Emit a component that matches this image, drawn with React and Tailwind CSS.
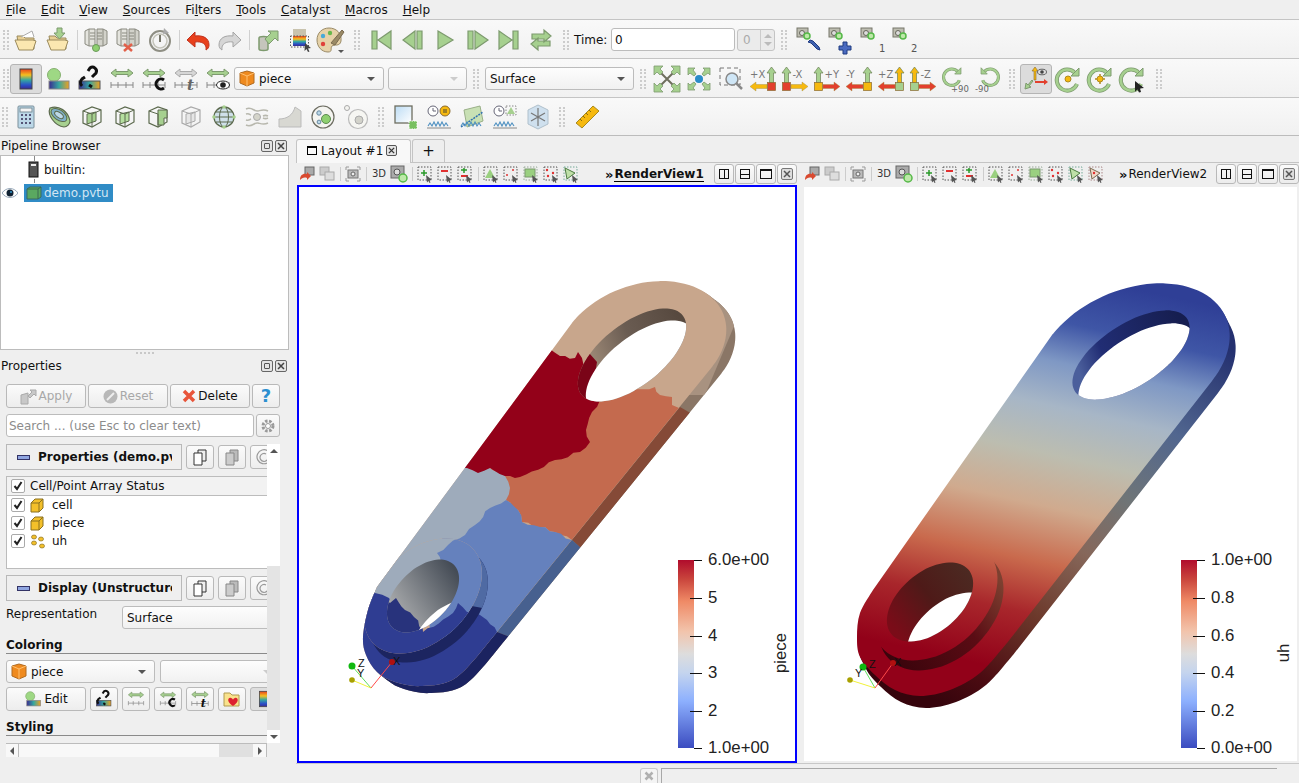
import React from "react";

const G = "#a6d08f";
const GS = "#7d9a6e";
const Y = "#f6b90f";
const R = "#e2402d";

// smooth curve through points, straight lines between the arcs
const arc = (pts) => {
  let d = `L${pts[0][0]} ${pts[0][1]}`;
  for (let i = 0; i < pts.length - 1; i++) {
    const p0 = pts[i - 1] || pts[i];
    const p1 = pts[i];
    const p2 = pts[i + 1];
    const p3 = pts[i + 2] || p2;
    d += `C${p1[0] + (p2[0] - p0[0]) / 6} ${p1[1] + (p2[1] - p0[1]) / 6} ${p2[0] - (p3[0] - p1[0]) / 6} ${p2[1] - (p3[1] - p1[1]) / 6} ${p2[0]} ${p2[1]}`;
  }
  return d;
};
const shape = (...arcs) => `M${arcs[0][0][0]} ${arcs[0][0][1]}` + arcs.map(arc).join("") + "Z";
const poly = (pts) => pts.map((p) => p.join(",")).join(" ");

// points on a tilted ellipse, given its centre and two conjugate half axes
const ell = (c, a, b, from = 360, to = 0, n = 40) =>
  Array.from({ length: n + 1 }, (_, i) => {
    const t = ((from + ((to - from) * i) / n) * Math.PI) / 180;
    return [c[0] + a[0] * Math.cos(t) + b[0] * Math.sin(t), c[1] + a[1] * Math.cos(t) + b[1] * Math.sin(t)];
  });
const ellipse = (c, a, b) => shape(ell(c, a, b));

// rough edge between the partition pieces
const jag = (pts) => {
  const out = [];
  pts.forEach((p, i) => {
    const q = pts[(i + 1) % pts.length];
    const dx = q[0] - p[0];
    const dy = q[1] - p[1];
    const len = Math.hypot(dx, dy) || 1;
    const n = Math.max(1, Math.round(len / 6));
    for (let k = 0; k < n; k++) {
      const off = k === 0 ? 0 : 1.400 * Math.sin((p[0] + k) * 7.3 + p[1] * 3.1 + k * k);
      out.push([p[0] + (dx * k) / n - (dy / len) * off, p[1] + (dy * k) / n + (dx / len) * off]);
    }
  });
  return poly(out);
};

const Svg = ({ children, w = 24, h = 24 }) => (
  <svg width={w} height={h} viewBox="0 0 24 24" className="overflow-visible">
    {children}
  </svg>
);

const Rainbow = ({ id }) => (
  <linearGradient id={id} x1="0" y1="0" x2="0" y2="1">
    <stop offset="0" stopColor="#e8401c" />
    <stop offset="0.3" stopColor="#f5c020" />
    <stop offset="0.55" stopColor="#35a8a0" />
    <stop offset="0.8" stopColor="#2a50c8" />
    <stop offset="1" stopColor="#3a2a90" />
  </linearGradient>
);

const Folder = ({ arrow }) => (
  <Svg>
    <path d="M3 8h6l2 2h9v11H5z" fill="#e8cf94" stroke="#9a8a5c" />
    <path d="M1 12h18l3 1-3 9H5z" fill="#fbe7b0" stroke="#9a8a5c" />
    {arrow ? (
      <path d="M11 0h5v5h3l-5.500 6L8 5h3z" fill={G} stroke={GS} />
    ) : (
      <path d="M7 9l11-6 2 6" fill="#fff" stroke="#aaa" />
    )}
  </Svg>
);

const Server = ({ bad }) => (
  <Svg>
    <path d="M1 3l4-2h6v17H5l-4-2z" fill="#e4e4de" stroke="#8a8a80" />
    <path d="M5 1v17" stroke="#8a8a80" />
    <path d="M13 1h6l4 2v13l-4 2h-6z" fill="#d2d2ca" stroke="#8a8a80" />
    <path d="M19 1v17M6 5h5M6 8h5M6 11h5M13 5h5M13 8h5M13 11h5" stroke="#8a8a80" />
    {bad ? (
      <path d="M8 16l8 7M16 16l-8 7" stroke="#e2604a" strokeWidth="2.500" />
    ) : (
      <circle cx="12" cy="20" r="3.500" fill="#8fd070" stroke="#6a9a5a" />
    )}
  </Svg>
);

const Arrow = ({ flip, color = "#e8401c", stroke = "#c0301c" }) => (
  <Svg>
    <g transform={flip ? "matrix(-1 0 0 1 24 0)" : ""}>
      <path d="M1 12l8-8v4c8-1 14 2 14 9 0 2-1 4-3 5 1-6-4-9-11-8v5z" fill={color} stroke={stroke} />
    </g>
  </Svg>
);

const Vcr = ({ d }) => (
  <Svg>
    <path d={d} fill={G} stroke={GS} strokeWidth="1.200" />
  </Svg>
);

const Cam = ({ children }) => (
  <svg width="26" height="26" viewBox="0 0 26 26" className="overflow-visible">
    <rect x="1" y="1" width="11" height="9" fill="#bdbdb0" stroke="#77776a" />
    <circle cx="6" cy="6" r="2.500" fill="#ddd" stroke="#66665a" />
    <circle cx="11" cy="9" r="3" fill="#bde8a8" stroke="#55b848" strokeWidth="1.500" />
    {children}
  </svg>
);

const Scale = ({ children, tone = G, edge = GS }) => (
  <Svg>
    <path d="M1 6l5-4v2.500h12V2l5 4-5 4V7.500H6V10z" fill={tone} stroke={edge} />
    <path d="M1 18h22M1 15v6M8 15v6M16 15v6M23 15v6" stroke="#888" fill="none" />
    {children}
  </Svg>
);

const AxisIcon = ({ label, side, up, across, box }) => {
  const left = side === "L";
  return (
    <svg width="26" height="24" viewBox="0 0 26 24" className="overflow-visible">
      <g transform={left ? "" : "matrix(-1 0 0 1 26 0)"}>
        <path d="M4.500 0L9 6H6.500v10h-4V6H0z" fill={up} stroke="#6b7f55" strokeWidth=".7" />
        <path d="M9 17.500h11V15l6 4.500-6 4.500v-2.500H9z" fill={across} stroke="#a08a40" strokeWidth=".4" />
        <rect x=".5" y="15.500" width="8" height="8" fill={box} stroke="#8a6a30" strokeWidth=".7" />
      </g>
      <text x={left ? 10.500 : 0} y="11" fontSize="10" fill="#777" fontFamily="DejaVu Sans">
        {label}
      </text>
    </svg>
  );
};

const SpinPath = () => (
  <>
    <path d="M19 6a10.500 10.500 0 1 0 2 11" fill="none" stroke={GS} strokeWidth="4" />
    <path d="M19 6a10.500 10.500 0 1 0 2 11" fill="none" stroke={G} strokeWidth="2.500" />
    <path d="M23 1v8h-8z" fill={G} stroke={GS} />
  </>
);

const Spin = ({ children }) => (
  <Svg>
    <SpinPath />
    {children}
  </Svg>
);

const Box3 = ({ fill = G, edge = "#5c6a4e" }) => (
  <Svg>
    <path d="M3 6l9-4 9 3v12l-9 5-9-4z" fill="none" stroke={edge} strokeWidth="1.200" />
    <path d="M7 9l9-2v9l-9 3z" fill={fill} stroke={edge} />
    <path d="M3 6l9 3v13M12 9l9-4" fill="none" stroke={edge} />
  </Svg>
);

const Wave = () => (
  <path d="M1 21l2-3 2 3 2-4 2 4 2-4 2 4 2-4 2 4 2-3 2 3" fill="none" stroke="#4d8fc0" strokeWidth="1.100" />
);

const icons = {
  open: <Folder />,
  load: <Folder arrow />,
  connect: <Server />,
  disconnect: <Server bad />,
  timer: (
    <Svg>
      <circle cx="12" cy="13" r="10" fill="none" stroke="#8f8f84" strokeWidth="2" />
      <circle cx="12" cy="13" r="7" fill="none" stroke="#c4c4ba" strokeWidth="1.500" />
      <path d="M12 7v7" stroke="#77776a" strokeWidth="2" />
      <path d="M16 0l5 5-6 1z" fill="#aaa" />
    </Svg>
  ),
  undo: <Arrow />,
  redo: <Arrow flip color="#d6d6d6" stroke="#a5a5a5" />,
  save: (
    <Svg>
      <path d="M3 10c0-2 9-2 9 0v11c0 2-9 2-9 0z" fill="#c5c5bc" stroke={GS} strokeWidth="1.500" />
      <path d="M9 11l6-6-3-2h10v10l-3-3-6 6z" fill={G} stroke={GS} />
    </Svg>
  ),
  pick: (
    <Svg>
      <defs><Rainbow id="pk" /></defs>
      <rect x="5" y="1" width="13" height="7" fill="#c9c3ae" />
      <rect x="5" y="8" width="13" height="10" fill="url(#pk)" />
      <rect x="2.500" y="8" width="18" height="11" fill="none" stroke="#555" strokeDasharray="1.500 1.500" />
      <path d="M17 15l6 5-3 .5 1.500 3-1.500.5-1.500-3-2 2z" fill="#444" />
    </Svg>
  ),
  palette: (
    <svg width="30" height="26" viewBox="0 0 30 26" className="overflow-visible">
      <path d="M12 1C5 1 0 6 0 13s5 12 11 12c5 0 2-4 4-6s8 1 9-5C25 6 19 1 12 1z" fill="#e6d2a8" stroke="#9a8a66" />
      <circle cx="6" cy="9" r="2.200" fill="#47a9d8" />
      <circle cx="13" cy="6" r="2.200" fill="#68b84c" />
      <circle cx="6" cy="17" r="2.200" fill="#e0403a" />
      <path d="M14 16L25 3l2 2-9 13z" fill="#9a8a66" stroke="#7a6a50" />
      <path d="M21 23h6l-3 3z" fill="#555" />
    </svg>
  ),
  first: <Vcr d="M3 3h5v18H3zM22 3v18L9 12z" />,
  back: <Vcr d="M16 3h5v18h-5zM14 3v18L2 12z" />,
  play: <Vcr d="M5 3l15 9-15 9z" />,
  fwd: <Vcr d="M3 3h5v18H3zM10 3l13 9-13 9z" />,
  last: <Vcr d="M16 3h5v18h-5zM2 3l13 9-13 9z" />,
  loop: <Vcr d="M3 11V6h12V2l7 6-7 6v-3H8v0zM21 13v5H9v4l-7-6 7-6v3h7z" />,
  camWrench: (
    <Cam>
      <path d="M12 15l2-2 3 1 6 6 1 3-3-1-6-6z" fill="#3f62b0" stroke="#1f3a80" />
    </Cam>
  ),
  camPlus: (
    <Cam>
      <path d="M15 15h4v4h4v4h-4v4h-4v-4h-4v-4h4z" fill="#4a6ac0" stroke="#1f3a80" />
    </Cam>
  ),
  cam1: (
    <Cam>
      <text x="19" y="25" fontSize="10" fill="#555" fontFamily="DejaVu Sans">1</text>
    </Cam>
  ),
  cam2: (
    <Cam>
      <text x="19" y="25" fontSize="10" fill="#555" fontFamily="DejaVu Sans">2</text>
    </Cam>
  ),
  map: (
    <Svg>
      <defs><Rainbow id="mp" /></defs>
      <rect x="6" y="2" width="12" height="20" fill="url(#mp)" stroke="#444" />
    </Svg>
  ),
  ballBar: (
    <Svg>
      <defs>
        <linearGradient id="bb" x1="0" y1="0" x2="1" y2="0">
          <stop offset="0" stopColor="#3a2a90" />
          <stop offset="0.5" stopColor="#35a8a0" />
          <stop offset="1" stopColor="#f0a020" />
        </linearGradient>
      </defs>
      <circle cx="8" cy="8" r="6.500" fill="#9ed884" stroke="#86b070" />
      <rect x="3" y="14" width="20" height="8" fill="url(#bb)" stroke="#888" />
    </Svg>
  ),
  linkBar: (
    <Svg>
      <defs>
        <linearGradient id="lb" x1="0" y1="0" x2="1" y2="0">
          <stop offset="0" stopColor="#3a2a90" />
          <stop offset="0.5" stopColor="#35a8a0" />
          <stop offset="1" stopColor="#f0a020" />
        </linearGradient>
      </defs>
      <rect x="1" y="14" width="21" height="8" fill="url(#lb)" stroke="#555" />
      <path d="M4 19a5 5 0 0 1 0-7l3-2M14 10l4-4a4 4 0 0 0-6-5l-2 3M11 18l3 2" fill="none" stroke="#111" strokeWidth="3" />
    </Svg>
  ),
  scale: <Scale />,
  scaleC: (
    <Scale>
      <path d="M22 13a5 5 0 1 0 0 8" fill="none" stroke="#111" strokeWidth="3" />
    </Scale>
  ),
  scaleT: (
    <Scale tone="#d6d6d6" edge="#aaa">
      <text x="13" y="23" fontSize="15" fontWeight="700" fontStyle="italic" fill="#666" fontFamily="DejaVu Serif">t</text>
    </Scale>
  ),
  scaleE: (
    <Scale>
      <ellipse cx="17" cy="18" rx="6.500" ry="4" fill="#fff" stroke="#222" />
      <circle cx="17" cy="18" r="2.800" fill="#222" />
    </Scale>
  ),
  resetCam: (
    <svg width="26" height="26" viewBox="0 0 26 26" className="overflow-visible">
      <path d="M3 3l20 20M23 3L3 23" stroke="#6e6e5e" strokeWidth="2" />
      <path d="M0 0h9L6 3l3 3-3 3-3-3-3 3zM26 0v9l-3-3-3 3-3-3 3-3-3-3zM0 26v-9l3 3 3-3 3 3-3 3 3 3zM26 26h-9l3-3-3-3 3-3 3 3 3-3z" fill={G} stroke={GS} strokeWidth=".8" />
    </svg>
  ),
  center: (
    <Svg>
      <circle cx="12" cy="12" r="4" fill="#2a8cc8" />
      <path d="M1 1h7L6 3l3 4-2 2-4-3-2 2zM23 1v7l-2-2-4 3-2-2 3-4-2-2zM1 23v-7l2 2 4-3 2 2-3 4 2 2zM23 23h-7l2-2-3-4 2-2 4 3 2-2z" fill={G} stroke={GS} strokeWidth=".8" />
    </Svg>
  ),
  zoomBox: (
    <Svg>
      <rect x="1" y="1" width="20" height="17" fill="none" stroke="#777" strokeDasharray="4 3" />
      <circle cx="13" cy="12" r="6" fill="#cfe6f6" stroke="#888" strokeWidth="1.500" />
      <path d="M17 16l6 6" stroke="#888" strokeWidth="2.500" />
    </Svg>
  ),
  px: <AxisIcon label="+X" side="R" up={G} across={Y} box={R} />,
  mx: <AxisIcon label="-X" side="L" up={G} across={Y} box={R} />,
  py: <AxisIcon label="+Y" side="L" up={G} across={R} box={Y} />,
  my: <AxisIcon label="-Y" side="R" up={G} across={R} box={Y} />,
  pz: <AxisIcon label="+Z" side="R" up={Y} across={R} box={G} />,
  mz: <AxisIcon label="-Z" side="L" up={Y} across={R} box={G} />,
  rotP: (
    <Svg>
      <g transform="scale(.78)"><SpinPath /></g>
      <text x="8" y="24.500" fontSize="8.500" fill="#666" fontFamily="DejaVu Sans">+90</text>
    </Svg>
  ),
  rotM: (
    <Svg>
      <g transform="matrix(-.78 0 0 .78 24 0)"><SpinPath /></g>
      <text x="0" y="24.500" fontSize="8.500" fill="#666" fontFamily="DejaVu Sans">-90</text>
    </Svg>
  ),
  orient: (
    <Svg>
      <path d="M10 13V4H8l3-4 3 4h-2v9z" fill={Y} stroke="#8a6a30" strokeWidth=".6" />
      <path d="M11 14h9v-2l4 3-4 3v-2h-9z" fill={R} />
      <path d="M9 14l-4 5 2 1-6 2 1-6 2 2 4-5z" fill={G} stroke={GS} />
      <ellipse cx="18" cy="5" rx="4.500" ry="2.800" fill="#ddd" stroke="#666" />
      <circle cx="18" cy="5" r="1.800" fill="#444" />
    </Svg>
  ),
  rotCenter: (
    <Spin>
      <circle cx="12" cy="12" r="3" fill={Y} stroke="#b08a20" />
    </Spin>
  ),
  rotPick: (
    <Spin>
      <path d="M12 7v10M7 12h10" stroke="#b08a20" strokeWidth="1.500" />
      <circle cx="12" cy="12" r="3" fill={Y} stroke="#b08a20" />
    </Spin>
  ),
  rotMouse: (
    <Spin>
      <path d="M15 14l9 7-4 .5 1 3.500-2 .5-1.500-3-2.500 2z" fill="#222" />
    </Spin>
  ),
  calc: (
    <Svg>
      <rect x="4" y="1" width="16" height="22" rx="1" fill="#bcd8e8" stroke="#7a8f9a" />
      <rect x="6" y="3" width="12" height="4" fill="#f4f4f4" stroke="#7a8f9a" />
      <path d="M7 10h2M11 10h2M15 10h2M7 14h2M11 14h2M15 14h2M7 18h2M11 18h2M15 18h2" stroke="#557" strokeWidth="2" />
    </Svg>
  ),
  contour: (
    <Svg>
      <path d="M3 3c9-3 18 3 20 13 0 3-3 6-6 6C8 21 0 10 3 3z" fill={G} stroke="#5c6a4e" strokeWidth="1.200" />
      <ellipse cx="12" cy="10" rx="9" ry="5" transform="rotate(35 12 10)" fill="#7fb0c8" stroke="#5c6a4e" />
      <ellipse cx="12" cy="10" rx="5" ry="2.500" transform="rotate(35 12 10)" fill="#bcd8e8" stroke="#5c6a4e" />
    </Svg>
  ),
  clip: <Box3 />,
  slice: <Box3 fill="#b5df9f" />,
  threshold: (
    <Svg>
      <path d="M3 6l9-4 9 3v12l-9 5-9-4z" fill="none" stroke="#5c6a4e" strokeWidth="1.200" />
      <path d="M12 5h9v8h-3v7h-6z" fill={G} stroke="#5c6a4e" />
      <path d="M3 6l9 3v13" fill="none" stroke="#5c6a4e" />
    </Svg>
  ),
  extract: <Box3 fill="#e6e6e6" edge="#aaa" />,
  sphere: (
    <Svg>
      <circle cx="12" cy="12" r="10" fill="#cfe0ea" stroke="#5c6a4e" strokeWidth="1.300" />
      <ellipse cx="12" cy="12" rx="4.500" ry="10" fill="none" stroke="#5c6a4e" />
      <path d="M2 12h20M4 7h16M4 17h16" stroke="#5c6a4e" fill="none" />
      <circle cx="12" cy="2" r="1.800" fill={G} /><circle cx="2" cy="12" r="1.800" fill={G} />
      <circle cx="22" cy="12" r="1.800" fill={G} /><circle cx="12" cy="22" r="1.800" fill={G} />
    </Svg>
  ),
  stream: (
    <Svg>
      <path d="M1 4c6-3 8 3 12 2s6-2 10 0M1 20c6 3 8-3 12-2s6 2 10 0M1 9c3-1 3 0 5 1M1 15c3 1 3 0 5-1M18 11c2-1 3-1 5 0M18 13c2 1 3 1 5 0" fill="none" stroke="#b8b8ae" strokeWidth="1.500" />
      <circle cx="12" cy="12" r="3.500" fill="#d4d4ca" stroke="#aaa" />
    </Svg>
  ),
  warp: (
    <Svg>
      <path d="M1 22l0-8c8 0 14-4 16-12l6 4v16z" fill="#d8d8d2" stroke="#bbb" />
    </Svg>
  ),
  group: (
    <Svg>
      <circle cx="12" cy="12" r="11" fill="#f4f4f0" stroke="#6b6b60" strokeWidth="1.200" />
      <circle cx="15" cy="14" r="4.500" fill="#8ed070" stroke="#5c8a50" />
      <circle cx="8" cy="8" r="2.200" fill="#bcd8e8" stroke="#6688a0" />
      <circle cx="8" cy="17" r="1.900" fill="#bcd8e8" stroke="#6688a0" />
    </Svg>
  ),
  ungroup: (
    <Svg>
      <circle cx="14" cy="14" r="9.500" fill="#f6f6f2" stroke="#bbb" strokeWidth="1.200" />
      <circle cx="15" cy="15" r="4" fill="#d2d2ca" stroke="#aaa" />
      <circle cx="3" cy="3" r="2.500" fill="#f4f4f0" stroke="#aaa" />
    </Svg>
  ),
  saveSel: (
    <Svg>
      <defs>
        <linearGradient id="ss" x1="0" y1="0" x2="1" y2="1">
          <stop offset="0" stopColor="#bcdcf4" />
          <stop offset="1" stopColor="#fff" />
        </linearGradient>
      </defs>
      <rect x="1" y="1" width="17" height="17" fill="url(#ss)" stroke="#6e6e60" strokeWidth="1.300" />
      <rect x="15" y="16" width="8" height="8" fill="#78c060" stroke="#fff" strokeDasharray="1.500 1" />
    </Svg>
  ),
  clockA: (
    <Svg>
      <circle cx="6" cy="6" r="5" fill="#fff" stroke="#667" /><path d="M6 3v3h3" fill="none" stroke="#667" />
      <circle cx="18" cy="6" r="5" fill={Y} stroke="#8a6a30" /><rect x="16" y="4" width="4" height="4" fill="#a08020" />
      <Wave />
      <path d="M0 23h24" stroke="#888" />
    </Svg>
  ),
  plotSel: (
    <Svg>
      <path d="M4 5l16-4 3 15-16 6z" fill="#c8e0b4" stroke="#9ab088" />
      <path d="M1 22l22-15" stroke="#2f70b0" strokeWidth="1.500" strokeDasharray="2 1" />
      <Wave />
    </Svg>
  ),
  clockB: (
    <Svg>
      <circle cx="6" cy="6" r="5" fill="#fff" stroke="#667" /><path d="M6 3v3h3" fill="none" stroke="#667" />
      <rect x="13" y="1" width="10" height="9" fill="none" stroke="#888" strokeDasharray="1.500 1.500" />
      <path d="M18 2l4 7h-8z" fill={G} />
      <Wave />
      <path d="M0 23h24" stroke="#888" />
    </Svg>
  ),
  crystal: (
    <Svg>
      <path d="M12 0l10 5v14l-10 5-10-5V5z" fill="#cfe0ee" stroke="#b0c0cc" />
      <path d="M12 3v18M5 8l14 8M19 8L5 16" stroke="#777" strokeWidth="1.200" />
    </Svg>
  ),
  ruler: (
    <Svg>
      <path d="M1 18L18 1l6 5L7 23z" fill={Y} stroke="#a88a20" />
      <path d="M5 14l2 2M8 11l2 2M11 8l2 2M14 5l2 2" stroke="#8a6a10" />
    </Svg>
  ),
};

const Grip = ({ w = 17 }) => (
  <div className="flex shrink-0 justify-center" style={{ width: w }}>
    <div className="h-[20px] w-[6px] border-x-2 border-dotted border-[#cccccc]" />
  </div>
);

const Slot = ({ name, w = "w-[32px]", active }) => (
  <div className={`flex h-[30px] shrink-0 items-center justify-center ${w} ${active ? "rounded-[3px] border border-[#b5b5b5] bg-[#dcdcdc]" : ""}`}>
    {icons[name]}
  </div>
);

const Slots = ({ names, w }) => names.map((n) => <Slot key={n} name={n} w={w} />);

const Sep = () => (
  <div className="flex w-[6px] shrink-0 justify-center">
    <div className="h-[20px] w-px bg-[#d0d0d0]" />
  </div>
);

const Toolbar = ({ children, h = "h-[39px]" }) => (
  <div className={`flex ${h} items-center border-t border-[#c4c4c4] bg-linear-to-b from-[#f9f9f9] to-[#f1f1f1] pl-[1px] pt-[1px]`}>
    {children}
  </div>
);

const Combo = ({ w, children, dim }) => (
  <div className={`flex h-[23px] shrink-0 items-center justify-between rounded-[3px] border border-[#bcbcbc] bg-linear-to-b from-[#fdfdfd] to-[#f1f1f1] pl-[4px] pr-[8px] ${w}`}>
    <div className="flex items-center gap-[4px] whitespace-nowrap">{children}</div>
    <div className={`h-0 w-0 border-x-[4px] border-t-[4px] border-x-transparent ${dim ? "border-t-[#cccccc]" : "border-t-[#555555]"}`} />
  </div>
);

const Cube = () => (
  <svg width="16" height="17" viewBox="0 0 16 17">
    <path d="M1 3l7-2 7 2v10l-7 3-7-3z" fill="#ef8a1e" stroke="#b06a20" />
    <path d="M1 3l7 3 7-3M8 6v10" fill="none" stroke="#ffc070" />
  </svg>
);

const PanelTitleIcons = () => (
  <div className="flex gap-[2px]">
    {["float", "close"].map((k) => (
      <div key={k} className="flex h-[12px] w-[12px] items-center justify-center rounded-[2px] border border-[#666666] bg-[#e4e4e4]">
        {k === "float" ? (
          <div className="h-[6px] w-[6px] rounded-[1px] border border-[#555555]" />
        ) : (
          <svg width="8" height="8" viewBox="0 0 8 8"><path d="M1 1l6 6M7 1L1 7" stroke="#444" strokeWidth="1.500" /></svg>
        )}
      </div>
    ))}
  </div>
);

const Btn = ({ w, h = "h-[24px]", children, dim, on }) => (
  <div className={`flex ${h} ${w} shrink-0 items-center justify-center gap-[2px] rounded-[3px] border border-[#b9b9b9] ${on ? "bg-[#dedede]" : "bg-linear-to-b from-[#fbfbfb] to-[#ededed]"} ${dim ? "text-[#a8a8a8]" : "text-[#111111]"}`}>
    {children}
  </div>
);

const Mini = ({ name, size = 20 }) => (
  <div style={{ width: size, height: size }} className="flex items-center justify-center">
    <div style={{ transform: `scale(${size / 26})` }}>{icons[name]}</div>
  </div>
);

const Check = () => (
  <div className="flex h-[14px] w-[14px] shrink-0 items-center justify-center rounded-[2px] border border-[#aaaaaa] bg-white">
    <svg width="10" height="10" viewBox="0 0 10 10"><path d="M1.500 5l2.500 3 4.500-7" fill="none" stroke="#222" strokeWidth="2" /></svg>
  </div>
);

const SmallCube = () => (
  <svg width="14" height="15" viewBox="0 0 14 15">
    <path d="M1 5l4-4h8v9l-4 4H1z" fill="#f3c02a" stroke="#8a7020" />
    <path d="M1 5h8v9M9 5l4-4" fill="none" stroke="#8a7020" />
  </svg>
);

const PageIcon = ({ dark }) => (
  <svg width="16" height="17" viewBox="0 0 16 17">
    <path d="M6 1h8v11H6z" fill={dark ? "#eee" : "#bbb"} stroke={dark ? "#333" : "#888"} />
    <path d="M2 4h8v12H2z" fill={dark ? "#fff" : "#ccc"} stroke={dark ? "#333" : "#888"} />
  </svg>
);

const Section = ({ title }) => (
  <div className="flex h-[26px] items-center gap-[4px]">
    <div className="flex h-[26px] w-[176px] shrink-0 items-center overflow-hidden border border-[#b9b9b9] bg-[#efefef] pl-[10px]">
      <div className="h-[5px] w-[13px] shrink-0 border border-[#333366] bg-[#8fa5e0]" />
      <span className="ml-[8px] w-[134px] shrink-0 overflow-hidden whitespace-nowrap font-bold">{title}</span>
    </div>
    <Btn w="w-[28px]"><PageIcon dark /></Btn>
    <Btn w="w-[28px]"><PageIcon /></Btn>
    <Btn w="w-[28px]" dim><svg width="18" height="18" viewBox="0 0 18 18"><path d="M16 9a7 7 0 1 1-3-6M13 9a4 4 0 1 1-2-3" fill="none" stroke="#999" strokeWidth="1.200" /></svg></Btn>
  </div>
);

const Heading = ({ children, className }) => (
  <div className={`border-b border-[#8a8a8a] font-bold leading-[15px] ${className}`}>{children}</div>
);

const LeftPanel = () => (
  <div className="w-[296px] shrink-0">
    <div className="flex h-[19px] w-[289px] items-center justify-between pl-[1px] pr-[2px]">
      <span>Pipeline Browser</span>
      <PanelTitleIcons />
    </div>
    <div className="relative h-[195px] w-[289px] border border-[#bcbcbc] bg-white">
      <div className="absolute left-[33px] top-0 h-[27px] w-px bg-[#888888]" />
      <div className="relative mt-[5px] flex h-[18px] items-center pl-[27px]">
        <svg width="11" height="18" viewBox="0 0 11 18" className="bg-white">
          <rect x="1" y="1" width="9" height="15" fill="#555" stroke="#111" />
          <rect x="3" y="3" width="5" height="2" fill="#eee" />
        </svg>
        <span className="ml-[5px]">builtin:</span>
      </div>
      <div className="relative mt-[5px] flex h-[18px] items-center">
        <svg width="16" height="10" viewBox="0 0 16 10" className="ml-[1px]">
          <path d="M0 5c4-6 12-6 16 0-4 6-12 6-16 0z" fill="#fff" stroke="#9ab" />
          <circle cx="8" cy="5" r="3.500" fill="#123" />
          <circle cx="9" cy="4" r="1" fill="#39c" />
        </svg>
        <div className="ml-[6px] flex h-[18px] w-[89px] items-center bg-[#308cc6] pl-[2px] text-[#d3e6f3]">
          <svg width="16" height="14" viewBox="0 0 16 14">
            <path d="M1 3l3-2h11v10l-3 2H1z" fill="#5aa860" stroke="#3a6a60" />
            <path d="M1 3h11v10M12 3l3-2" fill="none" stroke="#3a6a50" />
          </svg>
          <span className="ml-[2px]">demo.pvtu</span>
        </div>
      </div>
    </div>
    <div className="flex h-[6px] w-[289px] justify-center pt-[2px]">
      <div className="h-[2px] w-[18px] border-t-2 border-dotted border-[#c8c8c8]" />
    </div>
    <div className="flex h-[19px] w-[289px] items-center justify-between pl-[1px] pr-[2px]">
      <span>Properties</span>
      <PanelTitleIcons />
    </div>
    <div className="pl-[6px] pt-[9px]">
      <div className="flex gap-[2px]">
        <Btn w="w-[80px]" dim>
          <svg width="17" height="17" viewBox="0 0 17 17"><path d="M1 7l7-2v11H1zM8 8l4-4-2-2h6v6l-2-2-4 4z" fill="#c8c8c8" stroke="#aaa" /></svg>
          Apply
        </Btn>
        <Btn w="w-[80px]" dim>
          <svg width="15" height="15" viewBox="0 0 15 15"><circle cx="7.500" cy="7.500" r="7" fill="#b8b8b8" /><path d="M4 11l7-7" stroke="#eee" strokeWidth="2" /></svg>
          Reset
        </Btn>
        <Btn w="w-[80px]">
          <svg width="14" height="14" viewBox="0 0 14 14"><path d="M2 2l10 10M12 2L2 12" stroke="#e8553a" strokeWidth="3.500" /></svg>
          Delete
        </Btn>
        <Btn w="w-[28px]">
          <span className="text-[18px] font-bold leading-none text-[#2c8fd0]">?</span>
        </Btn>
      </div>
      <div className="mt-[6px] flex gap-[2px]">
        <div className="flex h-[23px] w-[248px] items-center rounded-[3px] border border-[#bcbcbc] bg-white pl-[2px] text-[#8c8c8c]">
          Search ... (use Esc to clear text)
        </div>
        <Btn w="w-[24px]" h="h-[23px]">
          <svg width="16" height="16" viewBox="0 0 16 16"><circle cx="8" cy="8" r="5" fill="none" stroke="#999" strokeWidth="3" strokeDasharray="2.500 1.500" /><circle cx="8" cy="8" r="2.500" fill="#fff" stroke="#999" /></svg>
        </Btn>
      </div>
      <div className="mt-[7px] flex h-[299px]">
        <div className="w-[261px] overflow-hidden">
          <div className="w-[300px]">
            <Section title="Properties (demo.pvtu)" />
            <div className="mt-[6px] h-[93px] w-[300px] border border-[#bcbcbc] bg-white">
              <div className="flex h-[19px] items-center gap-[5px] border-b border-[#bcbcbc] bg-[#f2f2f2] pl-[4px]">
                <Check />
                <span>Cell/Point Array Status</span>
              </div>
              {["cell", "piece", "uh"].map((row) => (
                <div key={row} className="flex h-[18px] items-center pl-[4px]">
                  <Check />
                  <div className="ml-[5px] flex w-[22px] justify-start">
                    {row === "uh" ? (
                      <svg width="16" height="15" viewBox="0 0 16 15">
                        <ellipse cx="4" cy="3" rx="2.500" ry="2" fill="#f3c02a" stroke="#8a7020" strokeWidth=".7" />
                        <ellipse cx="11" cy="5" rx="2.500" ry="2" fill="#f3c02a" stroke="#8a7020" strokeWidth=".7" />
                        <ellipse cx="4" cy="9" rx="2.500" ry="2" fill="#f3c02a" stroke="#8a7020" strokeWidth=".7" />
                        <ellipse cx="12" cy="12" rx="2.500" ry="2" fill="#f3c02a" stroke="#8a7020" strokeWidth=".7" />
                      </svg>
                    ) : (
                      <SmallCube />
                    )}
                  </div>
                  <span>{row}</span>
                </div>
              ))}
            </div>
            <div className="mt-[6px]">
              <Section title="Display (UnstructuredGrid)" />
            </div>
            <div className="mt-[5px] flex h-[23px]">
              <span className="w-[116px] leading-[16px]">Representation</span>
              <div className="flex h-[23px] w-[180px] items-center rounded-[3px] border border-[#bcbcbc] bg-linear-to-b from-[#fdfdfd] to-[#f1f1f1] pl-[4px]">
                Surface
              </div>
            </div>
            <Heading className="mt-[9px] h-[16px]">Coloring</Heading>
            <div className="mt-[6px] flex gap-[5px]">
              <Combo w="w-[149px]"><Cube />piece</Combo>
              <Combo w="w-[120px]" dim />
            </div>
            <div className="mt-[4px] flex gap-[4px]">
              <Btn w="w-[80px]"><Mini name="ballBar" size={18} /><span>Edit</span></Btn>
              <Btn w="w-[28px]"><Mini name="linkBar" size={18} /></Btn>
              <Btn w="w-[28px]"><Mini name="scale" size={18} /></Btn>
              <Btn w="w-[28px]"><Mini name="scaleC" size={18} /></Btn>
              <Btn w="w-[28px]">
                <div className="scale-75">
                  <Scale><text x="13" y="23" fontSize="15" fontWeight="700" fontStyle="italic" fill="#111" fontFamily="DejaVu Serif">t</text></Scale>
                </div>
              </Btn>
              <Btn w="w-[28px]">
                <svg width="18" height="17" viewBox="0 0 18 17">
                  <path d="M1 2h6l2 2h7v11H1z" fill="#f9e28c" stroke="#b09a50" />
                  <path d="M10 15c-7-4-5-9-2-8 1 0 2 1 2 2 0-1 1-2 2-2 3-1 5 4-2 8z" fill="#dd2030" />
                </svg>
              </Btn>
              <Btn w="w-[28px]" on><Mini name="map" size={20} /></Btn>
            </div>
            <Heading className="mt-[9px] h-[16px]">Styling</Heading>
          </div>
        </div>
        <div className="flex w-[13px] flex-col bg-[#e4e4e4]">
          <div className="flex h-[122px] justify-center bg-white pt-[5px]">
            <div className="h-0 w-0 border-x-[4px] border-b-[4px] border-x-transparent border-b-[#555555]" />
          </div>
          <div className="flex-1" />
          <div className="flex h-[13px] items-center justify-center bg-white">
            <div className="h-0 w-0 border-x-[4px] border-t-[4px] border-x-transparent border-t-[#555555]" />
          </div>
        </div>
      </div>
      <div className="flex h-[14px] w-[261px] items-center border-t border-[#bcbcbc] bg-[#f8f8f8]">
        <div className="flex h-full w-[13px] items-center justify-center border-r border-[#bcbcbc]">
          <div className="h-0 w-0 border-y-[4px] border-r-[4px] border-y-transparent border-r-[#555555]" />
        </div>
        <div className="h-full flex-1" />
        <div className="h-full w-[34px] bg-[#e0e0e0]" />
        <div className="flex h-full w-[14px] items-center justify-center border-r border-[#bcbcbc]">
          <div className="h-0 w-0 border-y-[4px] border-l-[4px] border-y-transparent border-l-[#555555]" />
        </div>
      </div>
    </div>
  </div>
);

// small dotted selection icons of the view toolbar
const Sel = ({ mark, dots = "#555" }) => (
  <svg width="16" height="16" viewBox="0 0 16 16" className="overflow-visible">
    <rect x="1" y="1" width="13" height="13" fill="none" stroke={dots} strokeDasharray="1.500 1.500" />
    {mark}
    <path d="M9 9l6 5-2.500.5 1 2-1 .5-1-2-1.500 1.500z" fill="#555" />
  </svg>
);

const viewIcons = {
  undoCam: (
    <svg width="16" height="16" viewBox="0 0 16 16">
      <rect x="6" y="1" width="9" height="8" fill="#aaa" stroke="#666" />
      <path d="M1 14c0-5 3-7 7-6v-2l4 4-4 4v-2c-3-1-5 0-7 2z" fill="#d94a30" />
    </svg>
  ),
  redoCam: (
    <svg width="16" height="16" viewBox="0 0 16 16">
      <rect x="1" y="1" width="9" height="8" fill="#ccc" stroke="#aaa" />
      <rect x="6" y="6" width="9" height="8" fill="#ddd" stroke="#aaa" />
    </svg>
  ),
  shot: (
    <svg width="16" height="16" viewBox="0 0 16 16">
      <path d="M1 4V1h3M12 1h3v3M15 12v3h-3M4 15H1v-3" fill="none" stroke="#999" />
      <rect x="3" y="4" width="10" height="8" fill="#bbb" stroke="#777" />
      <circle cx="8" cy="8" r="2" fill="#eee" stroke="#666" />
    </svg>
  ),
  capture: (
    <svg width="18" height="18" viewBox="0 0 18 18">
      <rect x="1" y="1" width="13" height="12" fill="#aaa" stroke="#666" />
      <circle cx="7" cy="7" r="3" fill="#ddd" stroke="#555" />
      <circle cx="13" cy="13" r="4" fill="#bde8a8" stroke="#55b848" strokeWidth="1.500" />
    </svg>
  ),
  surf: <Sel mark={<path d="M4 7h6M7 4v6" stroke="#2a9a2a" strokeWidth="1.500" />} />,
  surfM: <Sel mark={<path d="M4 5h7" stroke="#e03030" strokeWidth="2" />} />,
  surfB: <Sel mark={<><path d="M4 4h6M7 2v5" stroke="#2a9a2a" strokeWidth="1.500" /><path d="M4 10h7" stroke="#e03030" strokeWidth="2" /></>} />,
  tri: <Sel mark={<path d="M7 3l5 9H2z" fill="#9ad080" />} />,
  pts: <Sel mark={<><circle cx="10" cy="4" r="1" fill="#e03030" /><circle cx="4" cy="9" r="1" fill="#e03030" /></>} />,
  block: <Sel dots="#9a9" mark={<rect x="2" y="3" width="10" height="8" fill="#9ad080" stroke="#7a9a6e" />} />,
  blockP: <Sel mark={<><circle cx="4" cy="4" r="1.200" fill="#e03030" /><circle cx="10" cy="7" r="1.200" fill="#e03030" /><circle cx="5" cy="10" r="1.200" fill="#e03030" /></>} />,
  poly: <Sel dots="#7a9" mark={<path d="M2 2l10 5-8 6z" fill="#bfe0a8" stroke="#4a7a40" />} />,
  polyP: <Sel dots="#a88" mark={<><path d="M2 2l10 5-8 6z" fill="#f0d8c8" stroke="#7a6a50" /><circle cx="6" cy="7" r="1.200" fill="#e03030" /></>} />,
};

const ViewSep = () => (
  <div className="flex w-[6px] justify-center">
    <div className="h-[14px] w-px bg-[#cccccc]" />
  </div>
);

const ViewIcon = ({ name }) => (
  <div className="flex h-[20px] w-[20px] items-center justify-center">{viewIcons[name]}</div>
);

const ViewBtn = ({ kind }) => (
  <div className="flex h-[20px] w-[20px] shrink-0 items-center justify-center rounded-[3px] border border-[#b9b9b9] bg-linear-to-b from-[#fbfbfb] to-[#ececec]">
    {kind === "h" && <div className="flex h-[10px] w-[10px] justify-center border border-[#111111]"><div className="h-full w-px bg-[#111111]" /></div>}
    {kind === "v" && <div className="flex h-[10px] w-[10px] items-center border border-[#111111]"><div className="h-px w-full bg-[#111111]" /></div>}
    {kind === "max" && <div className="h-[10px] w-[12px] border border-t-2 border-[#111111]" />}
    {kind === "x" && (
      <div className="flex h-[12px] w-[12px] items-center justify-center rounded-[2px] border border-[#777777] bg-[#dddddd]">
        <svg width="8" height="8" viewBox="0 0 8 8"><path d="M1 1l6 6M7 1L1 7" stroke="#555" strokeWidth="1.500" /></svg>
      </div>
    )}
  </div>
);

const ViewToolbar = ({ title, bold, extra, gapClass, className = "" }) => (
  <div className={`flex h-[22px] items-center ${className}`}>
    <ViewIcon name="undoCam" />
    <ViewIcon name="redoCam" />
    <ViewSep />
    <ViewIcon name="shot" />
    <ViewSep />
    <div className="flex w-[20px] justify-center text-[10px] text-[#333333]">3D</div>
    <ViewIcon name="capture" />
    <ViewSep />
    <ViewIcon name="surf" />
    <ViewIcon name="surfM" />
    <ViewIcon name="surfB" />
    <ViewSep />
    <ViewIcon name="tri" />
    <ViewIcon name="pts" />
    <ViewIcon name="block" />
    <ViewIcon name="blockP" />
    <ViewIcon name="poly" />
    {extra && <ViewIcon name="polyP" />}
    <div className={`flex items-center ${gapClass}`}>
      <span className="text-[13px] font-bold leading-none">»</span>
      <span className={`ml-[1px] ${bold ? "border-b border-black font-bold leading-[14px]" : ""}`}>{title}</span>
    </div>
    <div className="ml-auto flex gap-[1px]">
      <ViewBtn kind="h" />
      <ViewBtn kind="v" />
      <ViewBtn kind="max" />
      <ViewBtn kind="x" />
    </div>
  </div>
);

const Legend = ({ id, x, labels, title }) => {
  const ys = [560, 598, 636, 673, 711, 748];
  return (
    <g fontFamily="Liberation Sans, sans-serif" fontSize="16.800" fill="#222">
      <defs>
        <linearGradient id={id} x1="0" y1="1" x2="0" y2="0">
          <stop offset="0" stopColor="#3b4cc0" />
          <stop offset="0.25" stopColor="#8db0fe" />
          <stop offset="0.4" stopColor="#c4d4ee" />
          <stop offset="0.5" stopColor="#dddddd" />
          <stop offset="0.62" stopColor="#f2c4ac" />
          <stop offset="0.78" stopColor="#ef8a66" />
          <stop offset="0.9" stopColor="#c9443c" />
          <stop offset="1" stopColor="#b00c2c" />
        </linearGradient>
      </defs>
      <rect x={x} y="560" width="16" height="188" fill={`url(#${id})`} />
      {ys.map((y, i) => (
        <path key={y} d={`M${i === 0 || i === 5 ? x + 16 : x + 12} ${y + 0.5}H${x + 24}`} stroke="#111" />
      ))}
      {labels.map((t, i) => (
        <text key={t} x={x + 30} y={ys[i] + 5}>{t}</text>
      ))}
      <text transform={`translate(${x + 108} 653) rotate(-90)`} textAnchor="middle">{title}</text>
    </g>
  );
};

const Triad = ({ o, z, y, x }) => (
  <g fontFamily="Liberation Sans, sans-serif" fontSize="11" fill="#111">
    <path d={`M${o[0]} ${o[1]}L${z[0]} ${z[1]}`} stroke="#5fe05f" />
    <path d={`M${o[0]} ${o[1]}L${y[0]} ${y[1]}`} stroke="#f2f23a" />
    <path d={`M${o[0]} ${o[1]}L${x[0]} ${x[1]}`} stroke="#ff4a4a" />
    <circle cx={z[0]} cy={z[1]} r="3.500" fill="#10b810" />
    <circle cx={y[0]} cy={y[1]} r="2.800" fill="#a8a000" />
    <circle cx={x[0]} cy={x[1]} r="3" fill="#b01010" />
    <text x={z[0] + 6} y={z[1] + 1}>Z</text>
    <text x={y[0] + 5} y={y[1] - 3}>Y</text>
    <text x={x[0] + 1} y={x[1] + 3}>X</text>
  </g>
);

const topL = shape(
  ell([642, 345], [70, 22], [47, -60], 180, 0, 24),
  [[497, 632], [457, 677], [422, 686], [395, 682], [377, 672], [366, 655], [363, 637], [368, 610], [377, 587]],
);
const rimL = { c: [632, 355], a: [33, 12], b: [43, -45] };
const rimLowL = { c: [423, 596], a: [26, 10], b: [25, -35] };
const bossL = { c: [423, 596], a: [45, 17], b: [38, -55] };

// the partition pieces, painted over each other in order
const Pieces = () => (
  <>
    <rect x="340" y="270" width="400" height="440" fill="#c8a68c" />
    <polygon fill="#c46a4e" points={jag([[655, 387], [660, 395], [672, 397], [672, 405], [684, 412], [590, 540], [572, 540], [555, 532], [540, 527], [522, 522], [518, 510], [506, 500], [480, 480], [560, 400]])} />
    <polygon fill="#6581bd" points={jag([[506, 500], [518, 510], [522, 522], [540, 527], [555, 532], [572, 540], [590, 545], [510, 640], [430, 640], [420, 560], [480, 500]])} />
    <polygon fill="#9eabbb" points={jag([[505, 476], [510, 488], [506, 500], [490, 508], [475, 525], [465, 535], [448, 545], [437, 553], [441, 562], [400, 610], [350, 600], [350, 500], [460, 450]])} />
    <polygon fill="#930119" points={jag([[540, 340], [560, 356], [575, 358], [578, 352], [582, 358], [600, 400], [592, 412], [586, 430], [590, 442], [580, 452], [555, 460], [520, 477], [505, 476], [490, 468], [478, 473], [467, 468], [440, 460]])} />
    <polygon fill="#2f3d92" points={jag([[350, 592], [375, 593], [389, 598], [398, 608], [407, 612], [420, 623], [423, 632], [453, 613], [458, 603], [467, 612], [480, 615], [487, 620], [497, 632], [505, 640], [470, 720], [340, 720]])} />
  </>
);

const LeftView = () => (
  <svg viewBox="299 187 496 574" width="496" height="574" className="block">
    <defs>
      <clipPath id="cTopL"><path d={topL} /></clipPath>
      <clipPath id="cSideL">
        {[0.25, 0.5, 0.75, 1].map((k) => (
          <path key={k} d={topL} transform={`translate(${9 * k} ${7 * k})`} />
        ))}
      </clipPath>
      <clipPath id="cBossL"><path d={ellipse(bossL.c, bossL.a, bossL.b)} /></clipPath>
      <clipPath id="cBossLowL"><path d={ellipse([bossL.c[0] + 6, bossL.c[1] + 9], bossL.a, bossL.b)} /></clipPath>
      <clipPath id="cRimL"><path d={ellipse(rimL.c, rimL.a, rimL.b)} /></clipPath>
      <clipPath id="cRimLowL"><path d={ellipse(rimLowL.c, rimLowL.a, rimLowL.b)} /></clipPath>
      <linearGradient id="wallTan" gradientUnits="userSpaceOnUse" x1="580" y1="360" x2="680" y2="320">
        <stop offset="0" stopColor="#a8937f" />
        <stop offset="0.5" stopColor="#6a5c52" />
        <stop offset="1" stopColor="#57493f" />
      </linearGradient>
      <linearGradient id="wallGrey" gradientUnits="userSpaceOnUse" x1="395" y1="610" x2="455" y2="570">
        <stop offset="0" stopColor="#a7a9ab" />
        <stop offset="1" stopColor="#454c56" />
      </linearGradient>
    </defs>
    <g clipPath="url(#cSideL)">
      <rect x="340" y="270" width="400" height="440" fill="#8a7666" />
      <polygon points={poly([[690, 300], [745, 300], [705, 395], [680, 395]])} fill="#a89280" />
      <polygon points={poly([[680, 407], [720, 430], [600, 565], [572, 540]])} fill="#854a37" />
      <polygon points={poly([[572, 540], [600, 565], [530, 650], [510, 637], [497, 632]])} fill="#47608f" />
      <polygon points={poly([[510, 637], [497, 632], [340, 632], [340, 720], [510, 720]])} fill="#1b2360" />
    </g>
    <g clipPath="url(#cTopL)">
      <Pieces />
      <g clipPath="url(#cBossLowL)">
        <rect x="370" y="540" width="140" height="140" fill="#1c2560" />
        <polygon points={poly([[466, 605], [505, 612], [505, 545], [470, 545]])} fill="#4f6aa3" />
      </g>
      <g clipPath="url(#cBossL)"><Pieces /></g>
    </g>
    <path d={ellipse(rimL.c, rimL.a, rimL.b)} fill="url(#wallTan)" />
    <g clipPath="url(#cRimL)">
      <polygon points={poly([[570, 345], [582, 345], [597, 362], [590, 405], [570, 405]])} fill="#7a0418" />
      <path d={ellipse([rimL.c[0] + 8, rimL.c[1] + 12], rimL.a, rimL.b)} fill="#fff" />
    </g>
    <path d={ellipse(rimLowL.c, rimLowL.a, rimLowL.b)} fill="url(#wallGrey)" />
    <g clipPath="url(#cRimLowL)">
      <polygon points={jag([[380, 598], [390, 603], [396, 598], [405, 610], [414, 617], [423, 630], [423, 650], [380, 650]])} fill="#28337c" />
      <path d={ellipse([rimLowL.c[0] + 24, rimLowL.c[1] + 41], rimLowL.a, rimLowL.b)} fill="#fff" />
    </g>
    <Triad o={[371, 688]} z={[352, 666]} y={[352, 680]} x={[392, 662]} />
    <Legend id="lgL" x={678} labels={["6.0e+00", "5", "4", "3", "2", "1.0e+00"]} title="piece" />
  </svg>
);

const topR = shape(
  ell([1132, 358], [80, 23], [56, -71], 180, 0, 24),
  [[1007, 643], [980, 673], [950, 690], [920, 696], [895, 690], [875, 675], [860, 657], [857, 637], [860, 613], [873, 590]],
);
const rimR = { c: [1131, 355], a: [35, 12], b: [47, -43] };
const rimLowR = { c: [930, 602], a: [31, 11], b: [30, -38] };
const bossR = { c: [935, 600], a: [48, 20], b: [40, -57] };

const RightView = () => (
  <svg viewBox="804 187 493 574" width="493" height="574" className="block">
    <defs>
      <clipPath id="cSideR">
        {[0.25, 0.5, 0.75, 1].map((k) => (
          <path key={k} d={topR} transform={`translate(${6 * k} ${12 * k})`} />
        ))}
      </clipPath>
      <clipPath id="cRimR"><path d={ellipse(rimR.c, rimR.a, rimR.b)} /></clipPath>
      <clipPath id="cRimLowR"><path d={ellipse(rimLowR.c, rimLowR.a, rimLowR.b)} /></clipPath>
      <linearGradient id="faceR" gradientUnits="userSpaceOnUse" x1="1140" y1="290" x2="1054" y2="680">
        <stop offset="0" stopColor="#2f3f96" />
        <stop offset="0.12" stopColor="#3f56a6" />
        <stop offset="0.22" stopColor="#7f98c4" />
        <stop offset="0.33" stopColor="#a7b6c6" />
        <stop offset="0.45" stopColor="#bcbdb0" />
        <stop offset="0.58" stopColor="#d0aa8e" />
        <stop offset="0.72" stopColor="#c96a4d" />
        <stop offset="0.85" stopColor="#a8262b" />
        <stop offset="1" stopColor="#920119" />
      </linearGradient>
      <linearGradient id="sideRg" gradientUnits="userSpaceOnUse" x1="1200" y1="330" x2="950" y2="710">
        <stop offset="0" stopColor="#24306f" />
        <stop offset="0.22" stopColor="#51668f" />
        <stop offset="0.4" stopColor="#6f7577" />
        <stop offset="0.55" stopColor="#86675a" />
        <stop offset="0.72" stopColor="#6d3a2c" />
        <stop offset="0.9" stopColor="#4c0c12" />
        <stop offset="1" stopColor="#36040c" />
      </linearGradient>
      <linearGradient id="wallTopRg" gradientUnits="userSpaceOnUse" x1="1075" y1="360" x2="1180" y2="320">
        <stop offset="0" stopColor="#4b5f9c" />
        <stop offset="0.25" stopColor="#212d74" />
        <stop offset="1" stopColor="#161e50" />
      </linearGradient>
      <linearGradient id="wallLowRg" gradientUnits="userSpaceOnUse" x1="895" y1="630" x2="970" y2="570">
        <stop offset="0" stopColor="#7a0c18" />
        <stop offset="0.5" stopColor="#4e1a18" />
        <stop offset="1" stopColor="#4c2a22" />
      </linearGradient>
      <linearGradient id="crescentRg" gradientUnits="userSpaceOnUse" x1="890" y1="660" x2="1000" y2="580">
        <stop offset="0" stopColor="#3a040c" />
        <stop offset="0.6" stopColor="#5a0c14" />
        <stop offset="1" stopColor="#7c4030" />
      </linearGradient>
    </defs>
    <g clipPath="url(#cSideR)">
      <rect x="840" y="270" width="420" height="450" fill="url(#sideRg)" />
    </g>
    <path d={topR} fill="url(#faceR)" />
    <path d={ellipse([bossR.c[0] + 6, bossR.c[1] + 10], bossR.a, bossR.b)} fill="url(#crescentRg)" />
    <path d={ellipse(bossR.c, bossR.a, bossR.b)} fill="url(#faceR)" />
    <path d={ellipse(rimR.c, rimR.a, rimR.b)} fill="url(#wallTopRg)" />
    <g clipPath="url(#cRimR)">
      <path d={ellipse([rimR.c[0] + 6, rimR.c[1] + 13], rimR.a, rimR.b)} fill="#fff" />
    </g>
    <path d={ellipse(rimLowR.c, rimLowR.a, rimLowR.b)} fill="url(#wallLowRg)" />
    <g clipPath="url(#cRimLowR)">
      <path d={ellipse([rimLowR.c[0] + 20, rimLowR.c[1] + 30], rimLowR.a, rimLowR.b)} fill="#fff" />
    </g>
    <Triad o={[875, 688]} z={[863, 667]} y={[850, 680]} x={[893, 663]} />
    <Legend id="lgR" x={1181} labels={["1.0e+00", "0.8", "0.6", "0.4", "0.2", "0.0e+00"]} title="uh" />
  </svg>
);

export default function App() {
  return (
    <div className="h-[783px] w-[1299px] overflow-hidden bg-[#efefef] font-['DejaVu_Sans',sans-serif] text-[12px] leading-[16px] text-[#111111]">
      <div className="flex h-[19px] items-center gap-[15px] pl-[6px]">
        <span><u>F</u>ile</span>
        <span><u>E</u>dit</span>
        <span><u>V</u>iew</span>
        <span><u>S</u>ources</span>
        <span>Fi<u>l</u>ters</span>
        <span><u>T</u>ools</span>
        <span><u>C</u>atalyst</span>
        <span><u>M</u>acros</span>
        <span><u>H</u>elp</span>
      </div>

      <Toolbar>
        <Grip w={9} />
        <Slots names={["open", "load"]} />
        <Sep />
        <Slots names={["connect", "disconnect", "timer"]} />
        <Sep />
        <Slots names={["undo", "redo"]} />
        <Sep />
        <Slots names={["save", "pick", "palette"]} />
        <Grip />
        <Slots names={["first", "back", "play", "fwd", "last", "loop"]} />
        <Grip />
        <span className="w-[37px] shrink-0">Time:</span>
        <div className="flex h-[23px] w-[124px] shrink-0 items-center rounded-[3px] border border-[#bcbcbc] bg-white pl-[3px]">0</div>
        <div className="ml-[2px] flex h-[22px] w-[38px] shrink-0 items-center justify-between rounded-[3px] border border-[#c4c4c4] bg-[#ebebeb] pl-[5px] text-[#aaaaaa]">
          0
          <div className="flex h-full w-[14px] flex-col items-center justify-center gap-[4px] border-l border-[#cccccc]">
            <div className="h-0 w-0 border-x-[4px] border-b-[4px] border-x-transparent border-b-[#bbbbbb]" />
            <div className="h-0 w-0 border-x-[4px] border-t-[4px] border-x-transparent border-t-[#bbbbbb]" />
          </div>
        </div>
        <Grip w={18} />
        <Slots names={["camWrench", "camPlus", "cam1", "cam2"]} />
      </Toolbar>

      <Toolbar>
        <Grip w={9} />
        <Slot name="map" active />
        <Slots names={["ballBar", "linkBar", "scale", "scaleC", "scaleT", "scaleE"]} />
        <Combo w="w-[150px]"><Cube />piece</Combo>
        <div className="ml-[4px] flex">
          <Combo w="w-[79px]" dim />
        </div>
        <Grip w={18} />
        <Combo w="w-[149px]">Surface</Combo>
        <Grip />
        <Slots names={["resetCam", "center", "zoomBox", "px", "mx", "py", "my", "pz", "mz", "rotP", "rotM"]} />
        <Grip />
        <Slot name="orient" active />
        <Slots names={["rotCenter", "rotPick", "rotMouse"]} />
        <Grip w={22} />
      </Toolbar>

      <Toolbar h="h-[38px]">
        <Grip w={8} />
        <Slots names={["calc", "contour", "clip", "slice", "threshold", "extract", "sphere", "stream", "warp", "group", "ungroup"]} w="w-[33px]" />
        <Grip />
        <Slots names={["saveSel", "clockA", "plotSel", "clockB", "crystal"]} w="w-[33px]" />
        <Grip w={16} />
        <Slot name="ruler" w="w-[33px]" />
      </Toolbar>

      <div className="flex h-[648px] border-t border-[#bcbcbc]">
        <LeftPanel />
        <div className="flex min-w-0 flex-1 flex-col">
          <div className="flex h-[27px] items-end border-b border-[#c4c4c4] pt-[3px]">
            <div className="-mb-px flex h-[24px] w-[115px] items-center rounded-t-[3px] border border-b-0 border-[#c4c4c4] bg-[#f8f8f8] pb-[2px] pl-[10px]">
              <div className="h-[9px] w-[10px] border border-t-2 border-black" />
              <span className="ml-[4px]">Layout #1</span>
              <div className="ml-[3px] flex h-[11px] w-[11px] items-center justify-center rounded-[2px] border border-[#555555] bg-[#e4e4e4]">
                <svg width="7" height="7" viewBox="0 0 8 8"><path d="M1 1l6 6M7 1L1 7" stroke="#333" strokeWidth="1.500" /></svg>
              </div>
            </div>
            <div className="ml-px flex h-[23px] w-[33px] items-center justify-center rounded-t-[3px] border border-b-0 border-[#c4c4c4] bg-[#eeeeee] text-[15px]">
              +
            </div>
          </div>
          <div className="flex">
            <div className="ml-[1px] w-[500px]">
              <ViewToolbar title="RenderView1" bold gapClass="ml-[24px]" />
              <div className="h-[578px] border-2 border-[#0000ff] bg-white">
                <LeftView />
              </div>
            </div>
            <div className="ml-[7px] w-[495px]">
              <ViewToolbar title="RenderView2" extra gapClass="ml-[13px]" className="-ml-[2px]" />
              <div className="h-[578px] border-y-2 border-r-2 border-[#efefef] bg-white">
                <RightView />
              </div>
            </div>
          </div>
          <div className="flex flex-1 items-end border-t border-[#c8c8c8] pl-[344px]">
            <div className="flex h-[15px] w-[18px] items-center justify-center rounded-t-[3px] border border-b-0 border-[#c8c8c8] bg-[#f4f4f4]">
              <svg width="10" height="10" viewBox="0 0 10 10"><path d="M1.500 1.500l7 7M8.500 1.500l-7 7" stroke="#b0b0b0" strokeWidth="2.500" /></svg>
            </div>
            <div className="ml-[3px] h-[15px] w-[616px] border-l border-t border-[#a8a8a8]" />
          </div>
        </div>
      </div>
    </div>
  );
}
